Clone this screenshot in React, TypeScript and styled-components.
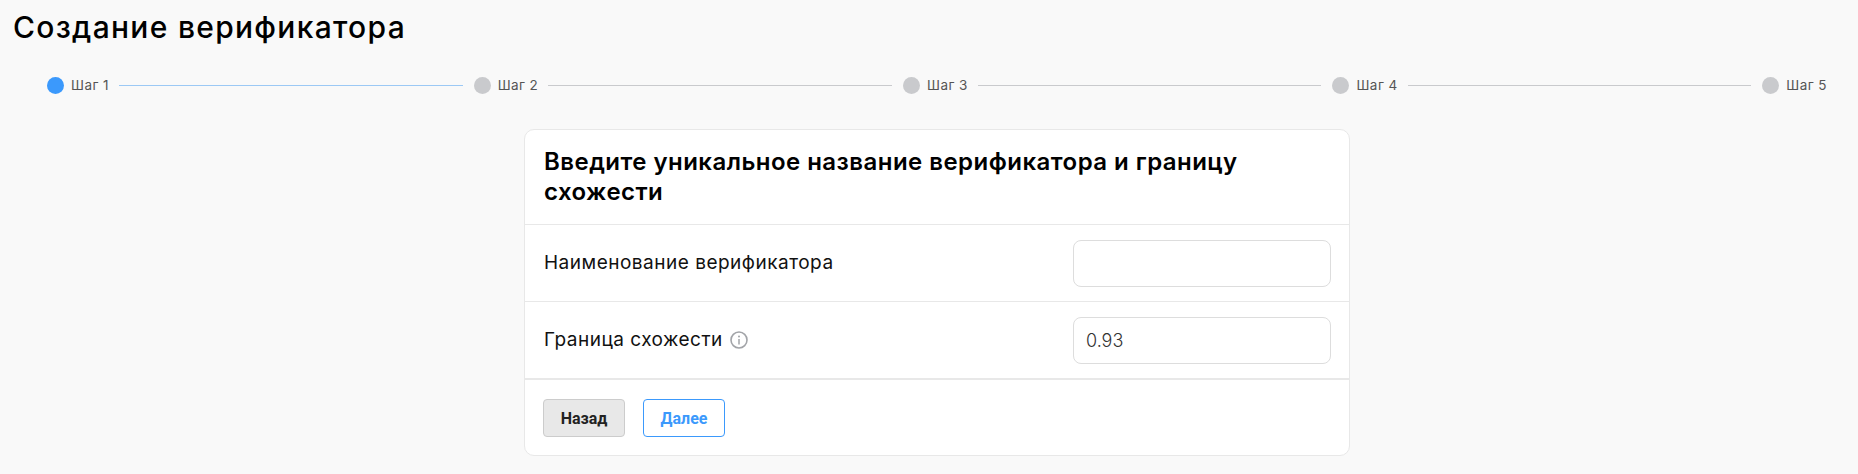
import React from 'react'
import styled, {createGlobalStyle} from 'styled-components'

const GlobalStyle = createGlobalStyle`
  html, body {
    margin: 0;
    padding: 0;
    background: #f9f9f9;
  }
`

const steps = ['Шаг 1', 'Шаг 2', 'Шаг 3', 'Шаг 4', 'Шаг 5']

const InfoIcon = () => (
    <svg width="18" height="18" viewBox="0 0 18 18" fill="none">
        <circle cx="9" cy="9" r="8" stroke="#a2a4a8" strokeWidth="1.6"/>
        <circle cx="9" cy="5.4" r="1" fill="#a2a4a8"/>
        <path d="M9 8v5.6" stroke="#a2a4a8" strokeWidth="1.5"/>
    </svg>
)

export default function App() {
    return (
        <Page>
            <GlobalStyle/>
            <Title>Создание верификатора</Title>
            <Content>
                <Stepper>
                    {steps.map((step, i) => (
                        <React.Fragment key={step}>
                            <Dot active={i === 0}/>
                            <StepLabel>{step}</StepLabel>
                            {i < steps.length - 1 && <Line active={i === 0}/>}
                        </React.Fragment>
                    ))}
                </Stepper>
                <Card>
                    <CardHeader>Введите уникальное название верификатора и границу схожести</CardHeader>
                    <Row>
                        <RowLabel>Наименование верификатора</RowLabel>
                        <Field/>
                    </Row>
                    <Row last>
                        <RowLabel>
                            Граница схожести
                            <InfoIcon/>
                        </RowLabel>
                        <Field defaultValue="0.93"/>
                    </Row>
                    <Footer>
                        <BackButton>Назад</BackButton>
                        <NextButton>Далее</NextButton>
                    </Footer>
                </Card>
            </Content>
        </Page>
    )
}

const Page = styled.div`
  box-sizing: border-box;
  height: 474px;
  padding: 9px 0 0 13px;
  background: #f9f9f9;
  font-family: Inter, "Noto Sans", sans-serif;
  overflow: hidden;
`
const Title = styled.h1`
  margin: 0;
  font-size: 30px;
  line-height: 36px;
  font-weight: 500;
  letter-spacing: 1.3px;
  color: #000;
`
const Content = styled.div`
  padding-left: 3px;
`
const Stepper = styled.div`
  display: flex;
  align-items: center;
  height: 20px;
  margin-top: 30px;
  padding: 0 31px;
`
const Dot = styled.span<{ active?: boolean }>`
  flex: none;
  width: 17px;
  height: 17px;
  border-radius: 50%;
  background: ${({active}) => (active ? '#3b99fc' : '#c9cacd')};
`
const StepLabel = styled.span`
  flex: none;
  margin-left: 7px;
  font-size: 13.5px;
  line-height: 17px;
  letter-spacing: 0.45px;
  color: #555;
`
const Line = styled.span<{ active?: boolean }>`
  flex: 1;
  height: 1px;
  margin: 0 11px 0 10px;
  background: ${({active}) => (active ? '#9cc9f5' : '#c9cacd')};
`
const Card = styled.div`
  box-sizing: border-box;
  width: 826px;
  height: 327px;
  margin: 34px auto 0;
  background: #fff;
  border: 1px solid #e8e8e8;
  border-radius: 10px;
`
const CardHeader = styled.div`
  box-sizing: border-box;
  height: 95px;
  padding: 17px 18px 0 19px;
  border-bottom: 1px solid #e8e8e8;
  font-size: 24px;
  line-height: 30px;
  font-weight: 600;
  letter-spacing: 0.46px;
  color: #000;
`
const Row = styled.div<{ last?: boolean }>`
  box-sizing: border-box;
  display: flex;
  align-items: flex-start;
  justify-content: space-between;
  height: ${({last}) => (last ? '78px' : '77px')};
  padding: 15px 18px 0 19px;
  border-bottom: ${({last}) => (last ? '2px' : '1px')} solid #e8e8e8;
`
const RowLabel = styled.div`
  display: flex;
  align-items: center;
  gap: 7px;
  height: 45px;
  font-size: 19px;
  letter-spacing: 0.5px;
  color: #111;
`
const Field = styled.input`
  box-sizing: border-box;
  width: 258px;
  height: 47px;
  padding: 0 12px;
  background: #fff;
  border: 1px solid #ddd;
  border-radius: 8px;
  outline: none;
  font-family: Inter, sans-serif;
  font-size: 18px;
  font-weight: 300;
  color: #333;
`
const Footer = styled.div`
  display: flex;
  gap: 18px;
  padding: 19px 18px 18px;
`
const BackButton = styled.button`
  box-sizing: border-box;
  width: 82px;
  height: 38px;
  background: #e8e8e8;
  border: 1px solid #ccc;
  border-radius: 4px;
  font-family: Roboto, sans-serif;
  font-size: 16px;
  font-weight: 700;
  color: #222;
`
const NextButton = styled(BackButton)`
  background: #fff;
  border-color: #3b99fc;
  color: #3b99fc;
`
